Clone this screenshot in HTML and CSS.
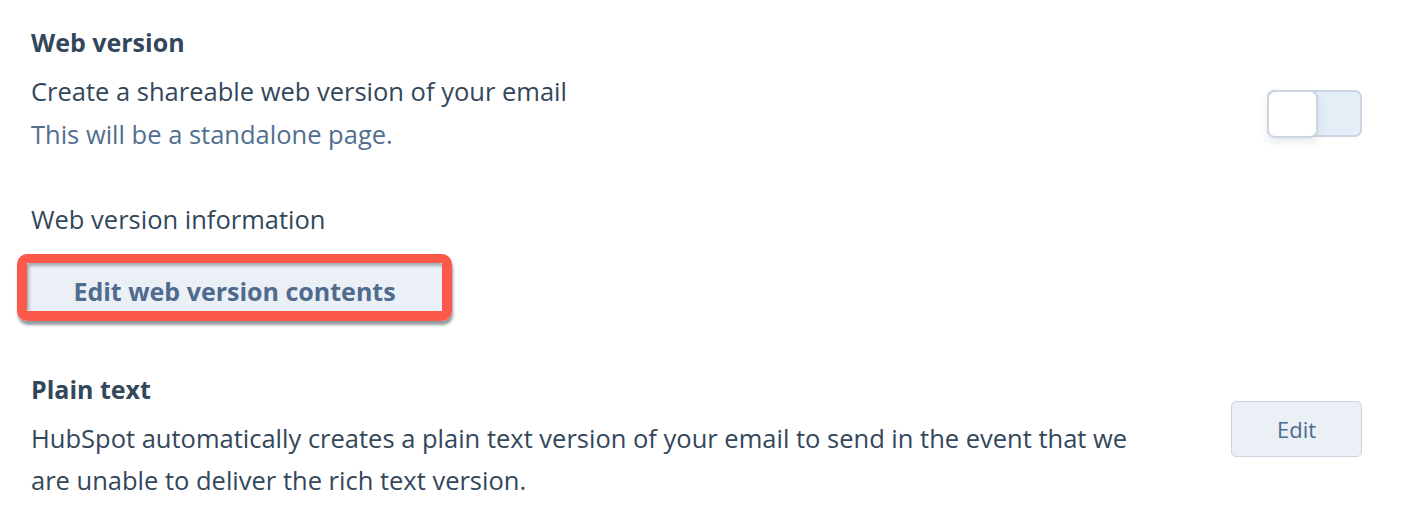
FILE: index.html
```html
<!DOCTYPE html>
<html>
<head>
<meta charset="utf-8">
<link rel="stylesheet" href="styles.css">
</head>
<body>
<div class="page">
  <section class="section">
    <h2 class="heading">Web version</h2>
    <div class="row">
      <div class="text">
        <p class="line">Create a shareable web version of your email</p>
        <p class="line muted">This will be a standalone page.</p>
      </div>
      <div class="toggle"><span class="knob"></span></div>
    </div>
  </section>

  <section class="section info">
    <p class="line">Web version information</p>
    <div class="highlight">
      <button class="btn-wide">Edit web version contents</button>
    </div>
  </section>

  <section class="section plain row top">
    <div class="text">
      <h2 class="heading">Plain text</h2>
      <p class="line para">HubSpot automatically creates a plain text version of your email to send in the event that we are unable to deliver the rich text version.</p>
    </div>
    <button class="btn-edit">Edit</button>
  </section>
</div>
</body>
</html>
```

FILE: styles.css
```css
* { box-sizing: border-box; }
html, body { margin: 0; padding: 0; background: #ffffff; }
body {
  font-family: "Open Sans", "Liberation Sans", sans-serif;
  color: #33475b;
}
.page {
  width: 1410px;
  padding: 22px 48px 0 31px;
}
.heading {
  margin: 0 0 8px;
  font-size: 25px;
  font-weight: 700;
  line-height: 40px;
  color: #33475b;
}
.line {
  margin: 0;
  font-size: 25.5px;
  line-height: 43px;
}
.muted { color: #516f90; }
.row {
  display: flex;
  align-items: center;
  justify-content: space-between;
}
.row.top { align-items: flex-start; }
.toggle {
  width: 95px;
  height: 47px;
  border: 2px solid #cbd6e2;
  border-radius: 7px;
  background: #e5edf7;
  position: relative;
}
.knob {
  position: absolute;
  left: -2px;
  top: -2px;
  width: 51px;
  height: 48px;
  background: #ffffff;
  border: 2px solid #cbd6e2;
  border-radius: 8px;
  box-shadow: 0 4px 8px rgba(45, 62, 80, 0.12);
}
.info { margin-top: 42px; }
.highlight {
  margin-top: 13px;
  margin-left: -14px;
  width: 435px;
  height: 67px;
  border: 10px solid #fb5a4a;
  border-top-width: 9px;
  border-radius: 10px;
  box-shadow: 1px 4px 3px rgba(60, 70, 80, 0.55);
}
.btn-wide {
  display: block;
  width: 100%;
  height: 100%;
  margin: 0;
  border: 0;
  border-radius: 2px;
  background: #eaf0f6;
  color: #4f6b8d;
  font-family: inherit;
  font-size: 25px;
  font-weight: 700;
  padding: 8px 0 0;
  box-shadow: inset 2px 3px 3px rgba(40, 50, 60, 0.35);
}
.plain { margin-top: 48px; }
.para { width: 1135px; line-height: 42px; }
.btn-edit {
  margin-top: 32px;
  width: 131px;
  height: 56px;
  border: 1px solid #cbd6e2;
  border-radius: 5px;
  background: #eaf0f6;
  color: #4f6b8d;
  font-family: inherit;
  font-size: 22px;
  padding: 0;
}
```
